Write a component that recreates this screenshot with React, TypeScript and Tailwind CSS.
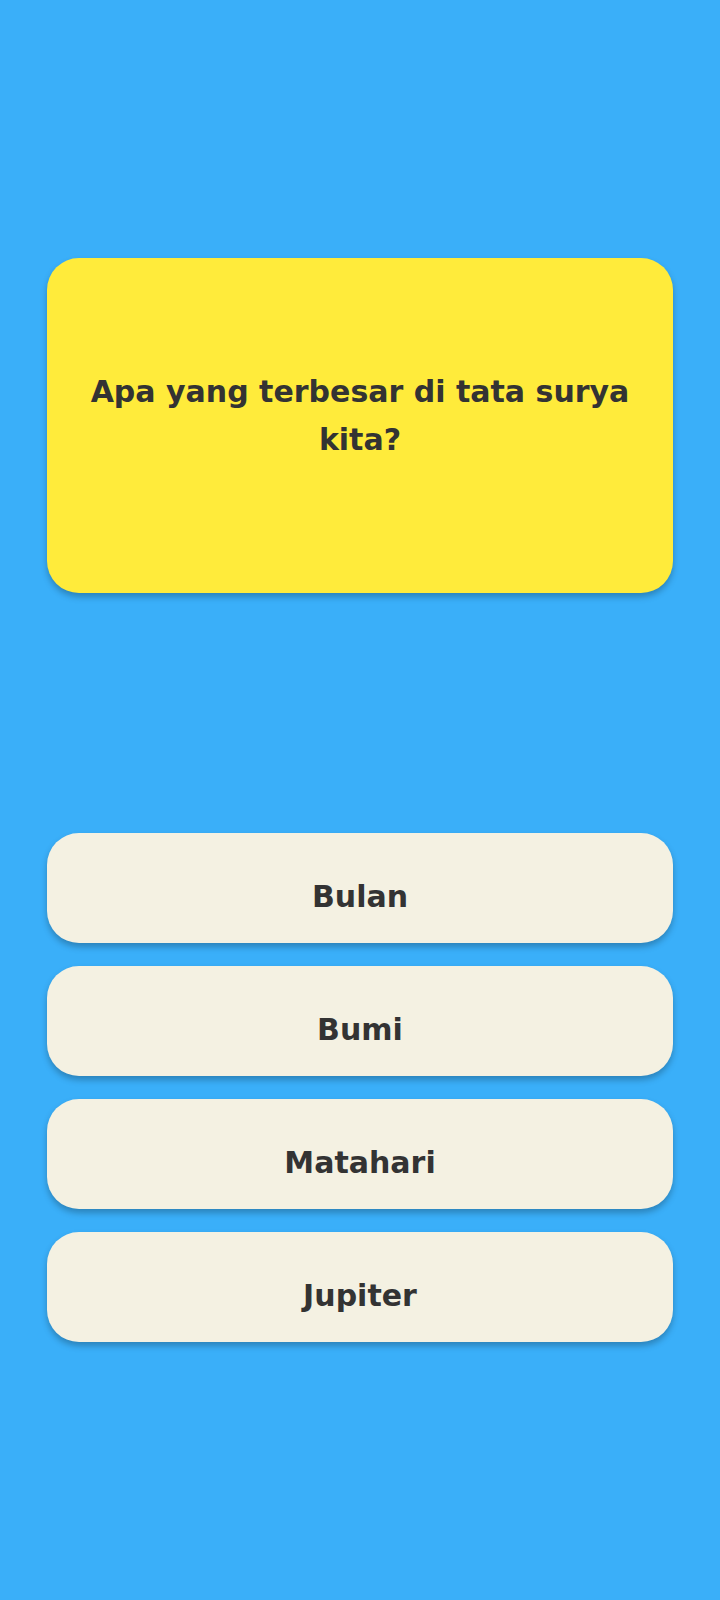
const options = ["Bulan", "Bumi", "Matahari", "Jupiter"];

export default function App() {
  return (
    <div
      className="min-h-[1600px] w-full bg-[#3aaff9] px-[47px] pt-[258px]"
      style={{ fontFamily: '"Comic Sans MS", "DejaVu Sans", sans-serif' }}
    >
      <div className="flex h-[335px] items-center justify-center rounded-[32px] bg-[#ffeb3b] px-7 pb-5 shadow-[0_4px_6px_rgba(0,0,0,0.25)]">
        <p className="text-center text-[30px] font-bold leading-[48px] text-[#333333]">
          Apa yang terbesar di tata surya kita?
        </p>
      </div>

      <div className="mt-[240px] flex flex-col gap-[23px]">
        {options.map((opt) => (
          <button
            key={opt}
            className="flex h-[110px] items-center justify-center rounded-[32px] bg-[#f4f1e2] pt-4 text-[30px] font-bold text-[#333333] shadow-[0_4px_6px_rgba(0,0,0,0.25)]"
          >
            {opt}
          </button>
        ))}
      </div>
    </div>
  );
}
